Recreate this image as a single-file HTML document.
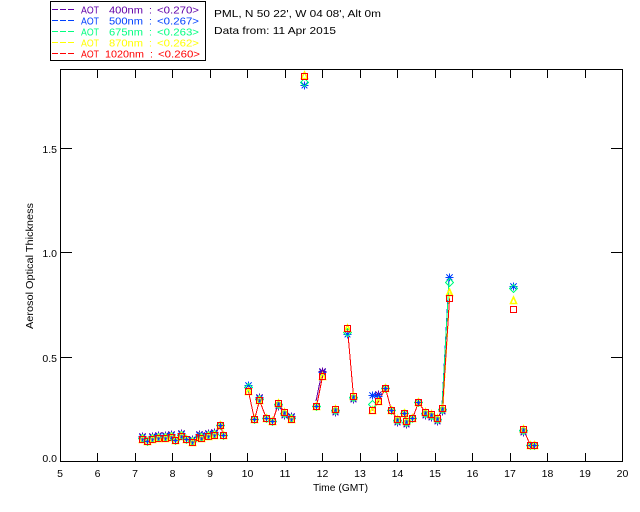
<!DOCTYPE html>
<html>
<head>
<meta charset="utf-8">
<style>
html,body{margin:0;padding:0;background:#fff}
svg{display:block}
text{font-family:"Liberation Sans",sans-serif;font-size:10.5px}
</style>
</head>
<body>
<svg width="640" height="512" viewBox="0 0 640 512" xmlns="http://www.w3.org/2000/svg">
<defs>
<g id="st" fill="none" stroke="currentColor" shape-rendering="crispEdges"><path d="M0-4V4M-4 0H4M-3-3L3 3M-3 3L3-3M-1-1H1V1H-1Z"/></g>
<g id="di" fill="none" stroke="#00ff80" shape-rendering="crispEdges"><path d="M0-4L4 0L0 4L-4 0Z"/></g>
<g id="tr" fill="none" stroke="#ffff00" stroke-width="1.6"><path d="M0-3.5L3 3H-3Z"/></g>
<g id="sq" fill="none" stroke="#ff0000" stroke-width="1.2" shape-rendering="crispEdges"><rect x="-3" y="-3" width="6" height="6"/></g>
<g id="m"><use href="#st" y="-3" color="#6000a8"/><use href="#st" y="-2" color="#0040ff"/><use href="#di" y="-1"/><use href="#tr"/><use href="#st" y="0" color="#0040ff" transform="scale(.5)"/><use href="#sq"/></g>
<g id="b"><use href="#st" y="3" color="#6000a8"/><use href="#st" y="2" color="#0040ff"/><use href="#di" y="1"/><use href="#tr"/><use href="#st" y="0" color="#0040ff" transform="scale(.5)"/><use href="#sq"/></g>
<g id="c"><use href="#di"/><use href="#tr"/><use href="#st" color="#0040ff" transform="scale(.6)"/><use href="#sq"/></g>
</defs>
<rect width="640" height="512" fill="#fff"/>

<!-- legend -->
<rect x="50.5" y="1.5" width="155" height="59" fill="#fff" stroke="#000" shape-rendering="crispEdges"/>
<g stroke-dasharray="6 2" shape-rendering="crispEdges">
<path d="M52 9.5H75" stroke="#6000a8"/>
<path d="M52 20.5H75" stroke="#0040ff"/>
<path d="M52 31.5H75" stroke="#00ff80"/>
<path d="M52 42.5H75" stroke="#ffff00"/>
<path d="M52 53.5H75" stroke="#ff0000"/>
</g>
<g fill="#6000a8"><text x="81" y="13.5" textLength="18" lengthAdjust="spacingAndGlyphs">AOT</text><text x="109" y="13.5" textLength="34" lengthAdjust="spacingAndGlyphs">400nm</text><text x="149" y="13.5">:</text><text x="157" y="13.5" textLength="42" lengthAdjust="spacingAndGlyphs">&lt;0.270&gt;</text></g>
<g fill="#0040ff"><text x="81" y="24.5" textLength="18" lengthAdjust="spacingAndGlyphs">AOT</text><text x="109" y="24.5" textLength="34" lengthAdjust="spacingAndGlyphs">500nm</text><text x="149" y="24.5">:</text><text x="157" y="24.5" textLength="42" lengthAdjust="spacingAndGlyphs">&lt;0.267&gt;</text></g>
<g fill="#00ff80"><text x="81" y="35.5" textLength="18" lengthAdjust="spacingAndGlyphs">AOT</text><text x="109" y="35.5" textLength="34" lengthAdjust="spacingAndGlyphs">675nm</text><text x="149" y="35.5">:</text><text x="157" y="35.5" textLength="42" lengthAdjust="spacingAndGlyphs">&lt;0.263&gt;</text></g>
<g fill="#ffff00"><text x="81" y="46.5" textLength="18" lengthAdjust="spacingAndGlyphs">AOT</text><text x="109" y="46.5" textLength="34" lengthAdjust="spacingAndGlyphs">870nm</text><text x="149" y="46.5">:</text><text x="157" y="46.5" textLength="42" lengthAdjust="spacingAndGlyphs">&lt;0.262&gt;</text></g>
<g fill="#ff0000"><text x="81" y="57.5" textLength="18" lengthAdjust="spacingAndGlyphs">AOT</text><text x="105" y="57.5" textLength="39" lengthAdjust="spacingAndGlyphs">1020nm</text><text x="150" y="57.5">:</text><text x="158" y="57.5" textLength="42" lengthAdjust="spacingAndGlyphs">&lt;0.260&gt;</text></g>

<!-- header -->
<text x="214" y="17" textLength="167" lengthAdjust="spacingAndGlyphs" fill="#000">PML, N 50 22', W 04 08', Alt 0m</text>
<text x="214" y="34" textLength="122" lengthAdjust="spacingAndGlyphs" fill="#000">Data from: 11 Apr 2015</text>

<!-- axes -->
<g fill="none" stroke="#000" shape-rendering="crispEdges">
<rect x="60.5" y="69.5" width="562" height="392"/>
<path d="M97.5 453V461M135.5 453V461M172.5 453V461M210.5 453V461M247.5 453V461M285.5 453V461M322.5 453V461M360.5 453V461M397.5 453V461M435.5 453V461M472.5 453V461M510.5 453V461M547.5 453V461M585.5 453V461"/>
<path d="M97.5 69V78M135.5 69V78M172.5 69V78M210.5 69V78M247.5 69V78M285.5 69V78M322.5 69V78M360.5 69V78M397.5 69V78M435.5 69V78M472.5 69V78M510.5 69V78M547.5 69V78M585.5 69V78"/>
<path d="M60 148.5H72M60 252.5H72M60 357.5H72M611 148.5H623M611 252.5H623M611 357.5H623"/>
</g>

<!-- y tick labels -->
<g fill="#000" text-anchor="end">
<text x="57" y="153">1.5</text>
<text x="57" y="257">1.0</text>
<text x="57" y="362">0.5</text>
<text x="57" y="462">0.0</text>
</g>
<!-- x tick labels -->
<g fill="#000" text-anchor="middle">
<text x="60" y="477">5</text><text x="97.5" y="477">6</text><text x="135" y="477">7</text><text x="172.5" y="477">8</text><text x="210" y="477">9</text><text x="247.5" y="477">10</text><text x="285" y="477">11</text><text x="322.5" y="477">12</text><text x="360" y="477">13</text><text x="397.5" y="477">14</text><text x="435" y="477">15</text><text x="472.5" y="477">16</text><text x="510" y="477">17</text><text x="547.5" y="477">18</text><text x="585" y="477">19</text><text x="622.5" y="477">20</text>
</g>
<text x="313" y="491" textLength="55" lengthAdjust="spacingAndGlyphs" fill="#000">Time (GMT)</text>
<text transform="translate(33 329) rotate(-90)" textLength="126" lengthAdjust="spacingAndGlyphs" fill="#000">Aerosol Optical Thickness</text>

<!-- under-lines on the steep segment -->
<g fill="none" shape-rendering="crispEdges">
<path d="M442 405L449 277" stroke="#0040ff"/>
<path d="M442 406L449 282" stroke="#00ff80"/>
<path d="M443 407L450 292" stroke="#ffff00"/>
<path d="M316 401L322 372" stroke="#6000a8"/>
</g>
<!-- red series lines -->
<g fill="none" stroke="#ff0000" shape-rendering="crispEdges">
<polyline points="142.5,439.5 147.5,441.5 152.5,439.5 158.5,438.5 165.5,438.5 171.5,438.5 175.5,440.5 181.5,437.5 186.5,439.5 192.5,442.5 199.5,437.5 201.5,438.5 208.5,436.5 214.5,435.5 220.5,425.5 223.5,435.5"/>
<polyline points="248.5,391.5 254.5,419.5 259.5,400.5 266.5,418.5 272.5,421.5 278.5,403.5 284.5,412.5 291.5,419.5"/>
<polyline points="316.5,406.5 322.5,376.5"/>
<polyline points="347.5,328.5 353.5,396.5"/>
<polyline points="372.5,410.5 378.5,401.5 385.5,388.5 391.5,410.5 397.5,419.5 404.5,413.5 406.5,421.5 412.5,418.5 418.5,402.5 425.5,412.5 431.5,414.5 437.5,418.5 442.5,408.5 449.5,298.5"/>
<polyline points="523.5,429.5 530.5,445.5 534.5,445.5"/>
</g>

<!-- markers -->
<use href="#m" x="142.5" y="439.5"/><use href="#c" x="147.5" y="441.5"/><use href="#m" x="152.5" y="439.5"/><use href="#m" x="158.5" y="438.5"/><use href="#m" x="165.5" y="438.5"/><use href="#m" x="171.5" y="437.5"/><use href="#c" x="175.5" y="440.5"/><use href="#m" x="181.5" y="436.5"/><use href="#c" x="186.5" y="439.5"/><use href="#m" x="192.5" y="442.5"/><use href="#m" x="199.5" y="437.5"/><use href="#m" x="201.5" y="438.5"/><use href="#m" x="208.5" y="436.5"/><use href="#m" x="214.5" y="435.5"/><use href="#c" x="220.5" y="425.5"/><use href="#c" x="223.5" y="435.5"/>
<use href="#st" x="248.5" y="385.5" color="#0040ff"/><use href="#di" x="248.5" y="387.5"/><use href="#tr" x="248.5" y="391.5"/><use href="#sq" x="248.5" y="391.5"/>
<use href="#c" x="254.5" y="419.5"/><use href="#m" x="259.5" y="400.5"/><use href="#c" x="266.5" y="418.5"/><use href="#c" x="272.5" y="421.5"/><use href="#b" x="278.5" y="403.5"/><use href="#b" x="284.5" y="412.5"/><use href="#m" x="291.5" y="419.5"/>
<use href="#c" x="316.5" y="406.5"/>
<use href="#st" x="322.5" y="372.5" color="#0040ff"/><use href="#st" x="322.5" y="371.5" color="#6000a8"/><use href="#tr" x="322.5" y="376.5"/><use href="#sq" x="322.5" y="376.5"/>
<use href="#b" x="335.5" y="409.5"/>
<use href="#st" x="347.5" y="334.5" color="#0040ff"/><use href="#di" x="347.5" y="332.5"/><use href="#tr" x="347.5" y="328.5"/><use href="#sq" x="347.5" y="328.5"/>
<use href="#b" x="353.5" y="396.5"/>
<use href="#st" x="372.5" y="395.5" color="#0040ff"/><use href="#di" x="372.5" y="404.5"/><use href="#tr" x="372.5" y="410.5"/><use href="#sq" x="372.5" y="410.5"/>
<use href="#st" x="378.5" y="394.5" color="#6000a8"/><use href="#st" x="378.5" y="396.5" color="#0040ff"/><use href="#tr" x="378.5" y="401.5"/><use href="#sq" x="378.5" y="401.5"/>
<use href="#c" x="385.5" y="388.5"/><use href="#c" x="391.5" y="410.5"/><use href="#b" x="397.5" y="419.5"/><use href="#c" x="404.5" y="413.5"/><use href="#b" x="406.5" y="421.5"/><use href="#c" x="412.5" y="418.5"/><use href="#c" x="418.5" y="402.5"/><use href="#b" x="425.5" y="412.5"/><use href="#b" x="431.5" y="414.5"/><use href="#b" x="437.5" y="418.5"/><use href="#b" x="442.5" y="408.5"/>
<use href="#st" x="449.5" y="277.5" color="#0040ff"/><use href="#di" x="449.5" y="282.5"/><use href="#tr" x="449.5" y="292.5"/><use href="#sq" x="449.5" y="298.5"/>
<use href="#st" x="304.5" y="85.5" color="#0040ff"/><use href="#di" x="304.5" y="82.5"/><use href="#tr" x="304.5" y="75.5"/><use href="#sq" x="304.5" y="76.5"/>
<use href="#st" x="513.5" y="286.5" color="#0040ff"/><use href="#di" x="513.5" y="288.5"/><use href="#tr" x="513.5" y="300.5"/><use href="#sq" x="513.5" y="309.5"/>
<use href="#b" x="523.5" y="429.5"/><use href="#c" x="530.5" y="445.5"/><use href="#c" x="534.5" y="445.5"/>
</svg>
</body>
</html>
